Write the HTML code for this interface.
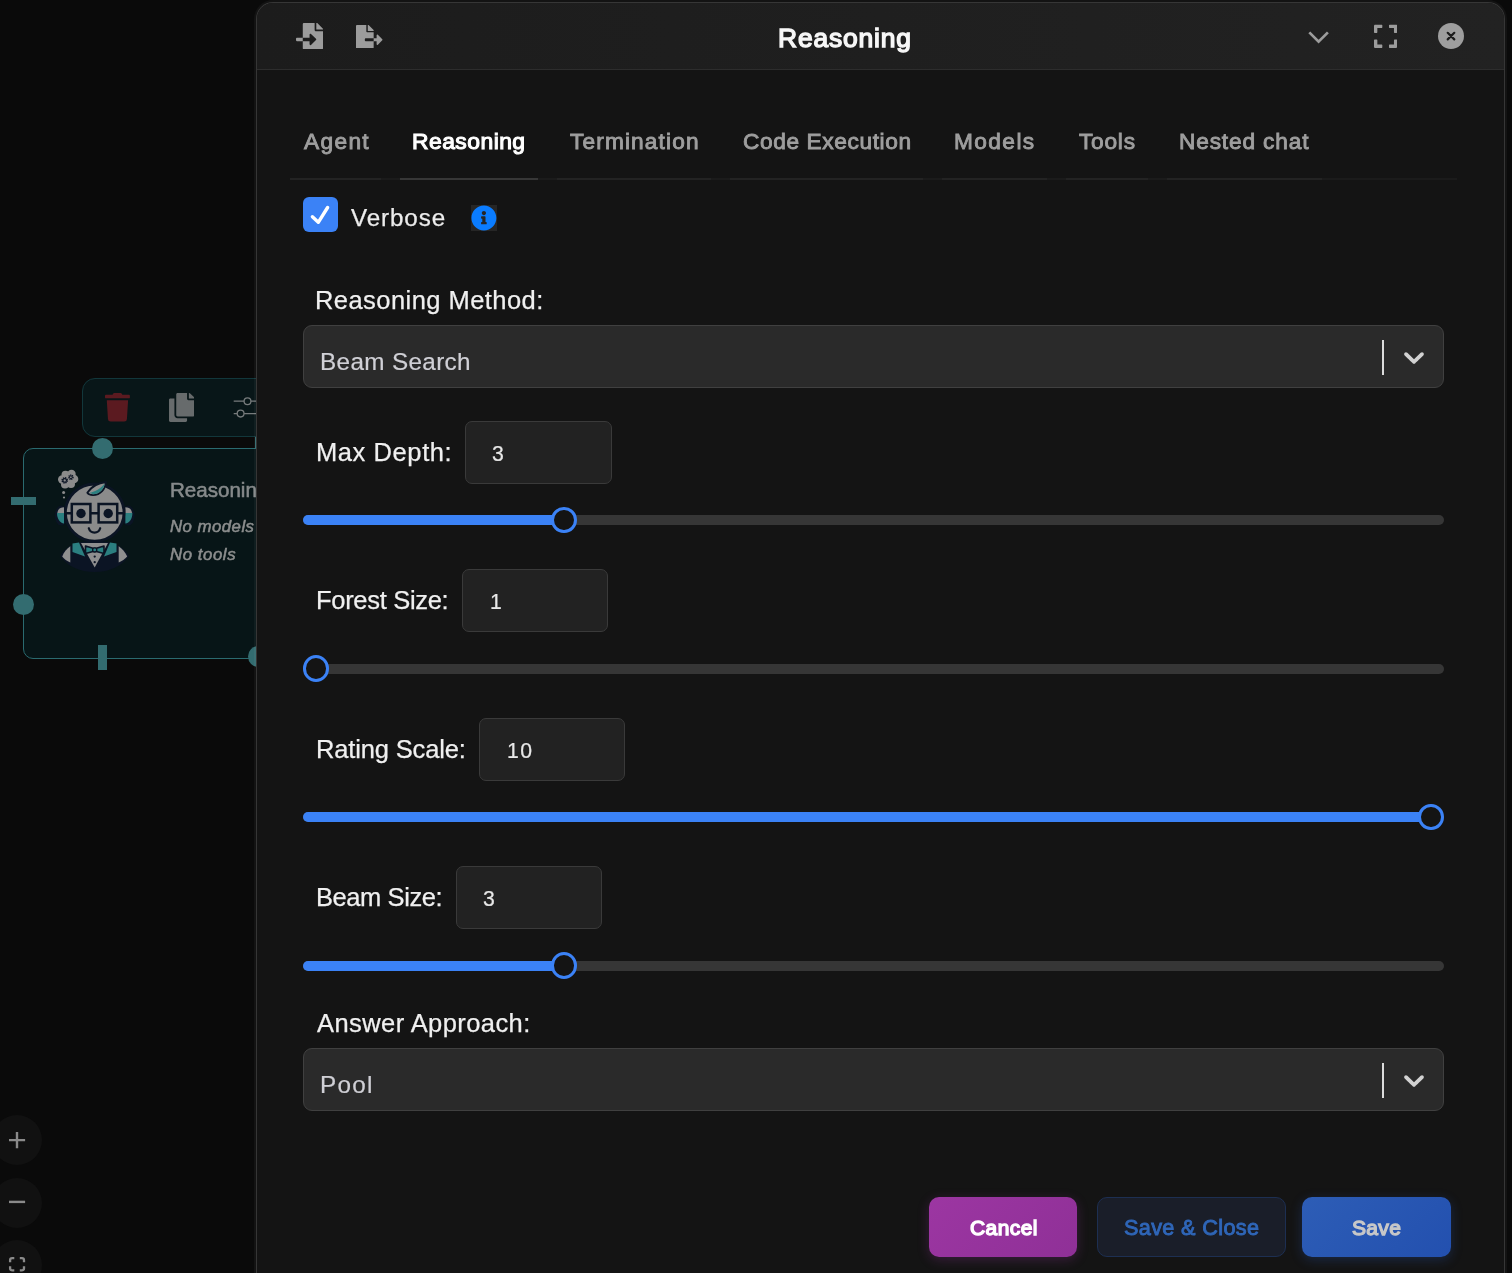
<!DOCTYPE html>
<html lang="en"><head><meta charset="utf-8"><title>Reasoning</title>
<style>
*{box-sizing:border-box;margin:0;padding:0}
html,body{width:1512px;height:1273px;overflow:hidden;background:#0a0a0a;font-family:"Liberation Sans", sans-serif;}
.abs{position:absolute}
.t{position:absolute;white-space:nowrap;display:block;will-change:transform}
#canvas{position:absolute;left:0;top:0;width:1512px;height:1273px;background:#0a0a0a;overflow:hidden}
.toolbar{position:absolute;left:82px;top:378px;width:260px;height:58.6px;border:1px solid #12373b;border-radius:13px;background:#081618}
.node{position:absolute;left:22.6px;top:447.9px;width:300px;height:210.8px;border:1.2px solid #2a6a6f;border-radius:10px;background:#071517}
.hc{position:absolute;width:21.2px;height:21.2px;border-radius:50%;background:#336c70}
.hr{position:absolute;background:#336c70}
.ctl{position:absolute;left:-8.3px;width:50px;height:50px;border-radius:50%;background:#111111}
#modal{position:absolute;left:256px;top:2px;width:1249px;height:1300px;border:solid #363636;border-width:1px 1px 0 1px;border-radius:17px 17px 0 0;background:#141414;overflow:hidden;box-shadow:0 0 0 2px rgba(255,255,255,.04)}
header{position:absolute;left:0;top:0;width:100%;height:67px;background:linear-gradient(90deg,#1c1c1c,#222222);border-bottom:1px solid #2d2d2d}
nav{position:absolute;left:33px;top:107px;width:1167px;height:70px;border-bottom:2px solid #1b1b1b}
.tab{position:absolute;top:0;height:70px;border-bottom:2px solid #232323}
.tab.on{border-bottom-color:#373737}
.check{position:absolute;left:46px;top:194px;width:35px;height:35px;border-radius:6px;background:#3b82f6}
.select{position:absolute;left:46px;width:1141px;height:63px;border:1px solid #404040;border-radius:9px;background:#2a2a2a}
.sep{position:absolute;left:1125.2px;width:1.8px;height:34.5px;background:#dcdcdc}
.input{position:absolute;height:63px;border:1px solid #3a3a3a;border-radius:7px;background:#222222}
.track{position:absolute;left:46px;width:1141px;height:10.2px;border-radius:5.1px;background:#363636}
.fill{position:absolute;left:46px;height:10.2px;border-radius:5.1px 0 0 5.1px;background:#3b82f6}
.thumb{position:absolute;width:26px;height:26.5px;border-radius:50%;border:3px solid #3b82f6;background:#141414}
.btn{position:absolute;top:1194px;height:60px;border-radius:10px}
</style></head>
<body>
<div id="canvas">
  <div class="toolbar"></div>
  <svg class="abs" style="left:104.9px;top:393.2px" width="24.9" height="28.5" viewBox="0 0 448 512"><path fill="#5b1a20" d="M432 32H312l-9.400-18.700A24 24 0 0 0 281.100 0H166.800a23.720 23.720 0 0 0-21.400 13.300L136 32H16A16 16 0 0 0 0 48v32a16 16 0 0 0 16 16h416a16 16 0 0 0 16-16V48a16 16 0 0 0-16-16zM53.200 467a48 48 0 0 0 47.900 45h245.800a48 48 0 0 0 47.900-45L416 128H32z"/></svg>
  <svg class="abs" style="left:168.7px;top:392.9px" width="25.3" height="28.9" viewBox="0 0 448 512"><path fill="#676b6c" d="M320 448v40c0 13.255-10.745 24-24 24H24c-13.255 0-24-10.745-24-24V120c0-13.255 10.745-24 24-24h72v296c0 30.879 25.121 56 56 56h168zm0-344V0H152c-13.255 0-24 10.745-24 24v368c0 13.255 10.745 24 24 24h272c13.255 0 24-10.745 24-24V128H344c-13.200 0-24-10.800-24-24zm120.971-31.029L375.029 7.029A24 24 0 0 0 358.059 0H352v96h96v-6.059a24 24 0 0 0-7.029-16.970z"/></svg>
  <svg class="abs" style="left:230px;top:395px" width="40" height="26" viewBox="0 0 40 26"><g fill="none" stroke="#777b7c" stroke-width="1.3"><path d="M3.7 6.200H14M21 6.200H40M3.7 18.600H7.100M14.100 18.600H40"/><circle cx="17.500" cy="6.200" r="3.400"/><circle cx="10.600" cy="18.600" r="3.400"/></g></svg>
  <div class="hr" style="left:254.6px;top:436.6px;width:3px;height:24px"></div>
  <div class="node"></div>
  <svg class="abs" style="left:50px;top:465px" width="90" height="112" viewBox="0 0 90 112">
<g>
<!-- thought cloud -->
<g fill="#8b8b8b"><circle cx="17.799999999999997" cy="14.300000000000011" r="6.2"/><circle cx="12.200000000000003" cy="14.5" r="4.2"/><circle cx="15" cy="19.5" r="4"/><circle cx="21" cy="19" r="4"/><circle cx="24" cy="14" r="4.3"/><circle cx="21.5" cy="9" r="4.2"/><circle cx="15.5" cy="9.800000000000011" r="4"/><circle cx="13.600000000000001" cy="27.5" r="1.5"/><circle cx="14" cy="32.5" r="1.1"/></g>
<circle cx="14.700000000000003" cy="15.399999999999977" r="2.55" fill="none" stroke="#0b1424" stroke-width="1.5" stroke-dasharray="1.25 0.75"/><circle cx="14.700000000000003" cy="15.399999999999977" r="1.75" fill="none" stroke="#0b1424" stroke-width="1.1"/>
<circle cx="20.900000000000006" cy="12.199999999999989" r="2.15" fill="none" stroke="#0b1424" stroke-width="1.3" stroke-dasharray="1.05 0.64"/><circle cx="20.900000000000006" cy="12.199999999999989" r="1.4" fill="none" stroke="#0b1424" stroke-width="1"/>
<!-- body -->
<path d="M10.3,91.0 C16.0,81.0 26.0,76.0 44.7,76.0 C63.0,76.0 73.0,81.0 79.0,91.0 C72.0,101.0 60.0,107.0 44.7,107.0 C29.0,107.0 17.0,101.0 10.3,91.0 Z" fill="#0b1424"/>
<path d="M12.2,91.5 C14.0,87.0 17.0,83.5 20.3,81.2 L20.3,97.5 C17.0,96.0 14.0,94.0 12.2,91.5 Z" fill="#8f8f8f"/>
<path d="M77.2,91.5 C75.0,87.0 72.0,83.5 68.7,81.2 L68.7,97.5 C72.0,96.0 75.0,94.0 77.2,91.5 Z" fill="#8f8f8f"/>
<path d="M22.5,78.5 L29.0,77.5 L35.0,91.5 L22.5,87.0 Z" fill="#2b7f80"/>
<path d="M66.5,78.5 L60.0,77.5 L54.0,91.5 L66.5,87.0 Z" fill="#2b7f80"/>
<path d="M31.0,78.0 L58.0,78.0 L44.7,102.5 Z" fill="#8f8f8f"/>
<path d="M35.5,81.0 L43.0,83.3 L46.4,83.3 L54.0,81.0 L54.0,88.5 L46.4,86.5 L43.0,86.5 L35.5,88.5 Z" fill="#2b7f80" stroke="#0b1424" stroke-width="1.6" stroke-linejoin="round"/>
<circle cx="44.7" cy="84.89999999999998" r="2.1" fill="#2b7f80" stroke="#0b1424" stroke-width="1.3"/>
<circle cx="44.7" cy="91.60000000000002" r="1.15" fill="#0b1424"/><circle cx="44.7" cy="97.20000000000005" r="1.15" fill="#0b1424"/>
<!-- ears -->
<ellipse cx="11.200000000000003" cy="50.60000000000002" rx="6.4" ry="10" fill="#0b1424"/><ellipse cx="78.19999999999999" cy="50.60000000000002" rx="6.4" ry="10" fill="#0b1424"/>
<path d="M7.3,48.0 C8.0,44.0 10.0,42.5 14.0,42.3 L14.0,48.0 Z" fill="#8f8f8f"/>
<path d="M7.0,48.0 L14.0,48.0 L14.0,58.6 C10.0,58.0 7.0,54.0 7.0,48.0 Z" fill="#2b7f80"/>
<path d="M82.1,48.0 C81.4,44.0 79.4,42.5 75.4,42.3 L75.4,48.0 Z" fill="#8f8f8f"/>
<path d="M82.4,48.0 L75.4,48.0 L75.4,58.6 C79.4,58.0 82.4,54.0 82.4,48.0 Z" fill="#2b7f80"/>
<!-- head -->
<ellipse cx="44.7" cy="47.60000000000002" rx="29.3" ry="28.6" fill="#8b8b8b" stroke="#0b1424" stroke-width="2.8"/>
<!-- hair -->
<path d="M37.3,27.8 C41.5,21.5 49.0,17.8 56.0,17.0 C55.5,24.0 50.5,30.0 43.0,30.1 C40.3,30.1 38.3,29.3 37.3,27.8 Z" fill="#8f8f8f" stroke="#0b1424" stroke-width="1.8" stroke-linejoin="round"/>
<path d="M39.5,27.8 C44.0,27.2 50.5,24.0 54.6,18.8 C53.8,25.0 49.0,29.2 43.0,29.2 Z" fill="#2b7f80"/>
<!-- glasses -->
<path d="M16.0,48.3 L21.0,48.3 M41.0,48.3 L48.0,48.3 M68.0,48.3 L73.5,48.3" stroke="#0b1424" stroke-width="2.4" fill="none"/>
<rect x="21.799999999999997" y="39" width="18.6" height="18.4" fill="#8b8b8b" stroke="#0b1424" stroke-width="2.5"/>
<rect x="48.599999999999994" y="39" width="18.6" height="18.4" fill="#8b8b8b" stroke="#0b1424" stroke-width="2.5"/>
<circle cx="31" cy="48.5" r="4.7" fill="#0b1424"/><circle cx="58.2" cy="48.5" r="4.7" fill="#0b1424"/>
<!-- smile -->
<path d="M38.8,63.2 C40.5,69.0 48.5,69.0 50.2,63.2" stroke="#0b1424" stroke-width="2.2" fill="none" stroke-linecap="round"/>
</g></svg>
  <span class="t" style="left:169.94px;top:475.50px;font-size:20.57px;line-height:27px;letter-spacing:0.000px;color:#868a8b;-webkit-text-stroke:0.55px #868a8b;">Reasoning</span>
  <span class="t" style="left:169.94px;top:515.80px;font-size:16.81px;line-height:22px;letter-spacing:0.463px;color:#8c8e8e;font-style:italic;-webkit-text-stroke:0.55px #8c8e8e;">No models</span>
  <span class="t" style="left:169.94px;top:544.00px;font-size:16.81px;line-height:22px;letter-spacing:0.563px;color:#8c8e8e;font-style:italic;-webkit-text-stroke:0.55px #8c8e8e;">No tools</span>
  <div class="hc" style="left:92px;top:438.3px"></div>
  <div class="hr" style="left:11.4px;top:496.6px;width:24.6px;height:8px"></div>
  <div class="hc" style="left:13.2px;top:594.3px"></div>
  <div class="hr" style="left:98px;top:645px;width:9px;height:24.7px"></div>
  <div class="hc" style="left:248px;top:646px"></div>
  <div class="ctl" style="top:1115px"></div>
  <div class="ctl" style="top:1177.600px"></div>
  <div class="ctl" style="top:1240px"></div>
  <svg class="abs" style="left:0;top:1120px" width="40" height="160" viewBox="0 1120 40 160"><g stroke="#8a8a8a" stroke-width="2.4" fill="none"><path d="M9 1140.100H25.100M17 1132V1148.200"/><path d="M9 1201.900H25.100"/></g><path fill="none" stroke="#8a8a8a" stroke-width="2.300" stroke-linejoin="round" d="M10.100 1262.300V1260.200q0-2 2-2H14.300M19.800 1258.200H22q2 0 2 2V1262.300M10.100 1266.300V1268.300q0 2 2 2H14.300M19.800 1270.300H22q2 0 2-2V1266.300"/></svg>
</div>
<div id="modal">
  <header>
    <svg class="abs" style="left:38.9px;top:19.8px" width="27.1" height="26.400" viewBox="0 0 512 512" preserveAspectRatio="none"><path fill="#9c9c9c" d="M16 288c-8.8 0-16 7.2-16 16v32c0 8.800 7.200 16 16 16h112v-64zm489-183L407.100 7c-4.500-4.500-10.600-7-17-7H384v128h128v-6.100c0-6.300-2.500-12.400-7-16.900zm-153 31V0H152c-13.300 0-24 10.700-24 24v264h128v-65.200c0-14.300 17.300-21.400 27.400-11.300L378 306.300c6.600 6.700 6.600 17.400 0 24l-94.700 95.400c-10.100 10.100-27.400 3-27.400-11.300V352H128v136c0 13.300 10.700 24 24 24h336c13.300 0 24-10.700 24-24V160H376c-13.200 0-24-10.800-24-24z"/></svg>
    <svg class="abs" style="left:99.0px;top:21.8px" width="26.500" height="23.600" viewBox="0 0 576 512" preserveAspectRatio="none"><path fill="#9c9c9c" d="M384 121.900c0-6.300-2.500-12.400-7-16.900L279.100 7c-4.500-4.500-10.600-7-17-7H256v128h128zM571 308l-95.700-96.400c-10.100-10.100-27.400-3-27.400 11.300V288h-64v64h64v65.200c0 14.300 17.300 21.400 27.400 11.300L571 332c6.600-6.600 6.600-17.400 0-24zm-379 28v-32c0-8.800 7.200-16 16-16h176V160H248c-13.200 0-24-10.800-24-24V0H24C10.700 0 0 10.700 0 24v464c0 13.300 10.700 24 24 24h336c13.300 0 24-10.700 24-24V352H208c-8.800 0-16-7.200-16-16z"/></svg>
    <span class="t" style="left:520.54px;top:18.14px;font-size:26.43px;line-height:34px;letter-spacing:0.827px;color:#f7f7f7;-webkit-text-stroke:1.40px #f7f7f7;">Reasoning</span>
    <svg class="abs" style="left:1043px;top:17px" width="40" height="32" viewBox="1300 20 40 32"><path d="M1309.300 32.400L1318.600 41.700L1327.900 32.400" fill="none" stroke="#9c9c9c" stroke-width="2.700"/></svg>
    <svg class="abs" style="left:1116.6px;top:20.0px" width="23.300" height="26.600" viewBox="0 0 448 512"><path fill="#9c9c9c" d="M0 180V56c0-13.300 10.700-24 24-24h124c6.600 0 12 5.400 12 12v40c0 6.600-5.400 12-12 12H64v84c0 6.600-5.400 12-12 12H12c-6.600 0-12-5.400-12-12zM288 44v40c0 6.600 5.400 12 12 12h84v84c0 6.600 5.400 12 12 12h40c6.600 0 12-5.400 12-12V56c0-13.300-10.700-24-24-24H300c-6.600 0-12 5.400-12 12zm148 276h-40c-6.600 0-12 5.400-12 12v84h-84c-6.600 0-12 5.400-12 12v40c0 6.600 5.400 12 12 12h124c13.300 0 24-10.700 24-24V332c0-6.600-5.400-12-12-12zM160 468v-40c0-6.600-5.400-12-12-12H64v-84c0-6.600-5.400-12-12-12H12c-6.600 0-12 5.400-12 12v124c0 13.300 10.700 24 24 24h124c6.600 0 12-5.400 12-12z"/></svg>
    <svg class="abs" style="left:1181px;top:20px" width="26" height="26" viewBox="0 0 26 26"><circle cx="13" cy="13" r="13" fill="#9e9e9e"/><path d="M9.700 9.800L16.300 16.400M16.300 9.800L9.700 16.400" stroke="#1c1c1c" stroke-width="2.200" stroke-linecap="round"/></svg>
  </header>
  <nav>
    <div class="tab" style="left:0;width:91px"></div>
    <div class="tab on" style="left:110px;width:138px"></div>
    <div class="tab" style="left:266.800px;width:153.800px"></div>
    <div class="tab" style="left:440.200px;width:192.400px"></div>
    <div class="tab" style="left:652.200px;width:104.800px"></div>
    <div class="tab" style="left:776.300px;width:81.500px"></div>
    <div class="tab" style="left:877px;width:154.900px"></div>
  </nav>
  <span class="t" style="left:46.53px;top:124.37px;font-size:22.69px;line-height:29px;letter-spacing:1.337px;color:#9e9e9e;-webkit-text-stroke:0.90px #9e9e9e;">Agent</span><span class="t" style="left:155.17px;top:123.40px;font-size:22.90px;line-height:30px;letter-spacing:0.457px;color:#ffffff;-webkit-text-stroke:1.10px #ffffff;">Reasoning</span><span class="t" style="left:312.57px;top:124.37px;font-size:22.69px;line-height:29px;letter-spacing:1.126px;color:#9e9e9e;-webkit-text-stroke:0.90px #9e9e9e;">Termination</span><span class="t" style="left:485.68px;top:124.49px;font-size:22.69px;line-height:29px;letter-spacing:0.604px;color:#9e9e9e;-webkit-text-stroke:0.90px #9e9e9e;">Code Execution</span><span class="t" style="left:697.33px;top:124.37px;font-size:22.69px;line-height:29px;letter-spacing:1.412px;color:#9e9e9e;-webkit-text-stroke:0.90px #9e9e9e;">Models</span><span class="t" style="left:822.47px;top:124.37px;font-size:22.69px;line-height:29px;letter-spacing:0.757px;color:#9e9e9e;-webkit-text-stroke:0.90px #9e9e9e;">Tools</span><span class="t" style="left:922.45px;top:124.37px;font-size:22.69px;line-height:29px;letter-spacing:0.840px;color:#9e9e9e;-webkit-text-stroke:0.90px #9e9e9e;">Nested chat</span>
  <div class="check"><svg width="35" height="35" viewBox="0 0 35 35"><path d="M9.400 19.700L15.300 25.300L24.600 10.500" fill="none" stroke="#fff" stroke-width="3.400" stroke-linecap="round" stroke-linejoin="round"/></svg></div>
  <span class="t" style="left:94.17px;top:198.92px;font-size:24.20px;line-height:31px;letter-spacing:0.896px;color:#ececec;-webkit-text-stroke:0.25px #ececec;">Verbose</span>
  <div class="abs" style="left:214.1px;top:201.8px;width:26px;height:26.200px;background:#262626"></div>
  <svg class="abs" style="left:214.2px;top:202.0px" width="25.800" height="25.800" viewBox="0 0 512 512"><path fill="#0a7cff" d="M256 8C119.043 8 8 119.083 8 256c0 136.997 111.043 248 248 248s248-111.003 248-248C504 119.083 392.957 8 256 8zm0 110c23.196 0 42 18.804 42 42s-18.804 42-42 42-42-18.804-42-42 18.804-42 42-42zm56 254c0 6.627-5.373 12-12 12h-88c-6.627 0-12-5.373-12-12v-24c0-6.627 5.373-12 12-12h12v-64h-12c-6.627 0-12-5.373-12-12v-24c0-6.627 5.373-12 12-12h64c6.627 0 12 5.373 12 12v100h12c6.627 0 12 5.373 12 12v24z"/></svg>
  <span class="t" style="left:58.49px;top:280.68px;font-size:25.51px;line-height:33px;letter-spacing:0.447px;color:#f0f0f0;-webkit-text-stroke:0.25px #f0f0f0;">Reasoning Method:</span>
  <div class="select" style="top:322px"></div>
<span class="t" style="left:63.15px;top:342.51px;font-size:24.27px;line-height:32px;letter-spacing:0.356px;color:#d0d0d6;-webkit-text-stroke:0.20px #d0d0d6;">Beam Search</span>
<div class="sep" style="top:337px"></div>
<svg class="abs" style="left:1139.7px;top:336.5px" width="34" height="34" viewBox="0 0 20 20"><path fill="#d2d2d2" d="M4.516 7.548c0.436-0.446 1.043-0.481 1.576 0l3.908 3.747 3.908-3.747c0.533-0.481 1.141-0.446 1.574 0 0.436 0.445 0.408 1.197 0 1.615-0.406 0.418-4.695 4.502-4.695 4.502-0.217 0.223-0.502 0.335-0.787 0.335s-0.570-0.112-0.789-0.335c0 0-4.287-4.084-4.695-4.502s-0.436-1.170 0-1.615z"/></svg>
  <div class="field">
<span class="t" style="left:58.69px;top:432.72px;font-size:25.51px;line-height:33px;letter-spacing:0.584px;color:#f0f0f0;-webkit-text-stroke:0.25px #f0f0f0;">Max Depth:</span>
<div class="input" style="left:208.0px;top:418.0px;width:147.0px"></div>
<span class="t" style="left:235.48px;top:436.75px;font-size:21.22px;line-height:28px;letter-spacing:0.000px;color:#e8e8e8;-webkit-text-stroke:0.20px #e8e8e8;">3</span>
<div class="track" style="top:512.0px"></div><div class="fill" style="top:512.0px;width:260.6px"></div>
<div class="thumb" style="left:293.61px;top:503.75px"></div>
</div>
  <div class="field">
<span class="t" style="left:58.69px;top:581.22px;font-size:25.51px;line-height:33px;letter-spacing:-0.309px;color:#f0f0f0;-webkit-text-stroke:0.25px #f0f0f0;">Forest Size:</span>
<div class="input" style="left:205.0px;top:566.0px;width:146.0px"></div>
<span class="t" style="left:233.28px;top:584.55px;font-size:21.22px;line-height:28px;letter-spacing:0.000px;color:#e8e8e8;-webkit-text-stroke:0.20px #e8e8e8;">1</span>
<div class="track" style="top:660.5px"></div>
<div class="thumb" style="left:45.75px;top:652.25px"></div>
</div>
  <div class="field">
<span class="t" style="left:58.69px;top:729.72px;font-size:25.51px;line-height:33px;letter-spacing:-0.150px;color:#f0f0f0;-webkit-text-stroke:0.25px #f0f0f0;">Rating Scale:</span>
<div class="input" style="left:222.3px;top:715.0px;width:146.0px"></div>
<span class="t" style="left:249.96px;top:733.75px;font-size:21.22px;line-height:28px;letter-spacing:1.488px;color:#e8e8e8;-webkit-text-stroke:0.20px #e8e8e8;">10</span>
<div class="track" style="top:809.0px"></div><div class="fill" style="top:809.0px;width:1128.2px"></div>
<div class="thumb" style="left:1161.25px;top:800.75px"></div>
</div>
  <div class="field">
<span class="t" style="left:58.69px;top:878.22px;font-size:25.51px;line-height:33px;letter-spacing:-0.416px;color:#f0f0f0;-webkit-text-stroke:0.25px #f0f0f0;">Beam Size:</span>
<div class="input" style="left:199.2px;top:863.0px;width:146.0px"></div>
<span class="t" style="left:225.54px;top:881.55px;font-size:21.22px;line-height:28px;letter-spacing:0.000px;color:#e8e8e8;-webkit-text-stroke:0.20px #e8e8e8;">3</span>
<div class="track" style="top:957.5px"></div><div class="fill" style="top:957.5px;width:260.6px"></div>
<div class="thumb" style="left:293.61px;top:949.25px"></div>
</div>
  <span class="t" style="left:59.52px;top:1004.00px;font-size:25.51px;line-height:33px;letter-spacing:0.420px;color:#f0f0f0;-webkit-text-stroke:0.25px #f0f0f0;">Answer Approach:</span>
  <div class="select" style="top:1045px"></div>
<span class="t" style="left:63.15px;top:1065.61px;font-size:24.27px;line-height:32px;letter-spacing:1.314px;color:#d0d0d6;-webkit-text-stroke:0.20px #d0d0d6;">Pool</span>
<div class="sep" style="top:1060px"></div>
<svg class="abs" style="left:1139.7px;top:1059.5px" width="34" height="34" viewBox="0 0 20 20"><path fill="#d2d2d2" d="M4.516 7.548c0.436-0.446 1.043-0.481 1.576 0l3.908 3.747 3.908-3.747c0.533-0.481 1.141-0.446 1.574 0 0.436 0.445 0.408 1.197 0 1.615-0.406 0.418-4.695 4.502-4.695 4.502-0.217 0.223-0.502 0.335-0.787 0.335s-0.570-0.112-0.789-0.335c0 0-4.287-4.084-4.695-4.502s-0.436-1.170 0-1.615z"/></svg>
  <div class="btn" style="left:672px;width:148px;background:linear-gradient(135deg,#9c36a2,#8f3097);box-shadow:0 3px 12px rgba(156,54,162,.28)"></div>
  <div class="btn" style="left:840px;width:189.300px;background:#1a1e29;border:1px solid #1d2f52"></div>
  <div class="btn" style="left:1045.3px;width:149px;background:linear-gradient(135deg,#2d5db6,#2350af);box-shadow:0 3px 12px rgba(40,86,178,.3)"></div>
  <span class="t" style="left:712.62px;top:1211.05px;font-size:20.93px;line-height:27px;letter-spacing:0.476px;color:#ffffff;-webkit-text-stroke:1.40px #ffffff;">Cancel</span><span class="t" style="left:866.84px;top:1211.18px;font-size:21.66px;line-height:28px;letter-spacing:0.343px;color:#2f66b8;-webkit-text-stroke:0.90px #2f66b8;">Save &amp; Close</span><span class="t" style="left:1094.86px;top:1211.02px;font-size:21.08px;line-height:27px;letter-spacing:0.271px;color:#c8c8c8;-webkit-text-stroke:1.30px #c8c8c8;">Save</span>
</div>
</body></html>
